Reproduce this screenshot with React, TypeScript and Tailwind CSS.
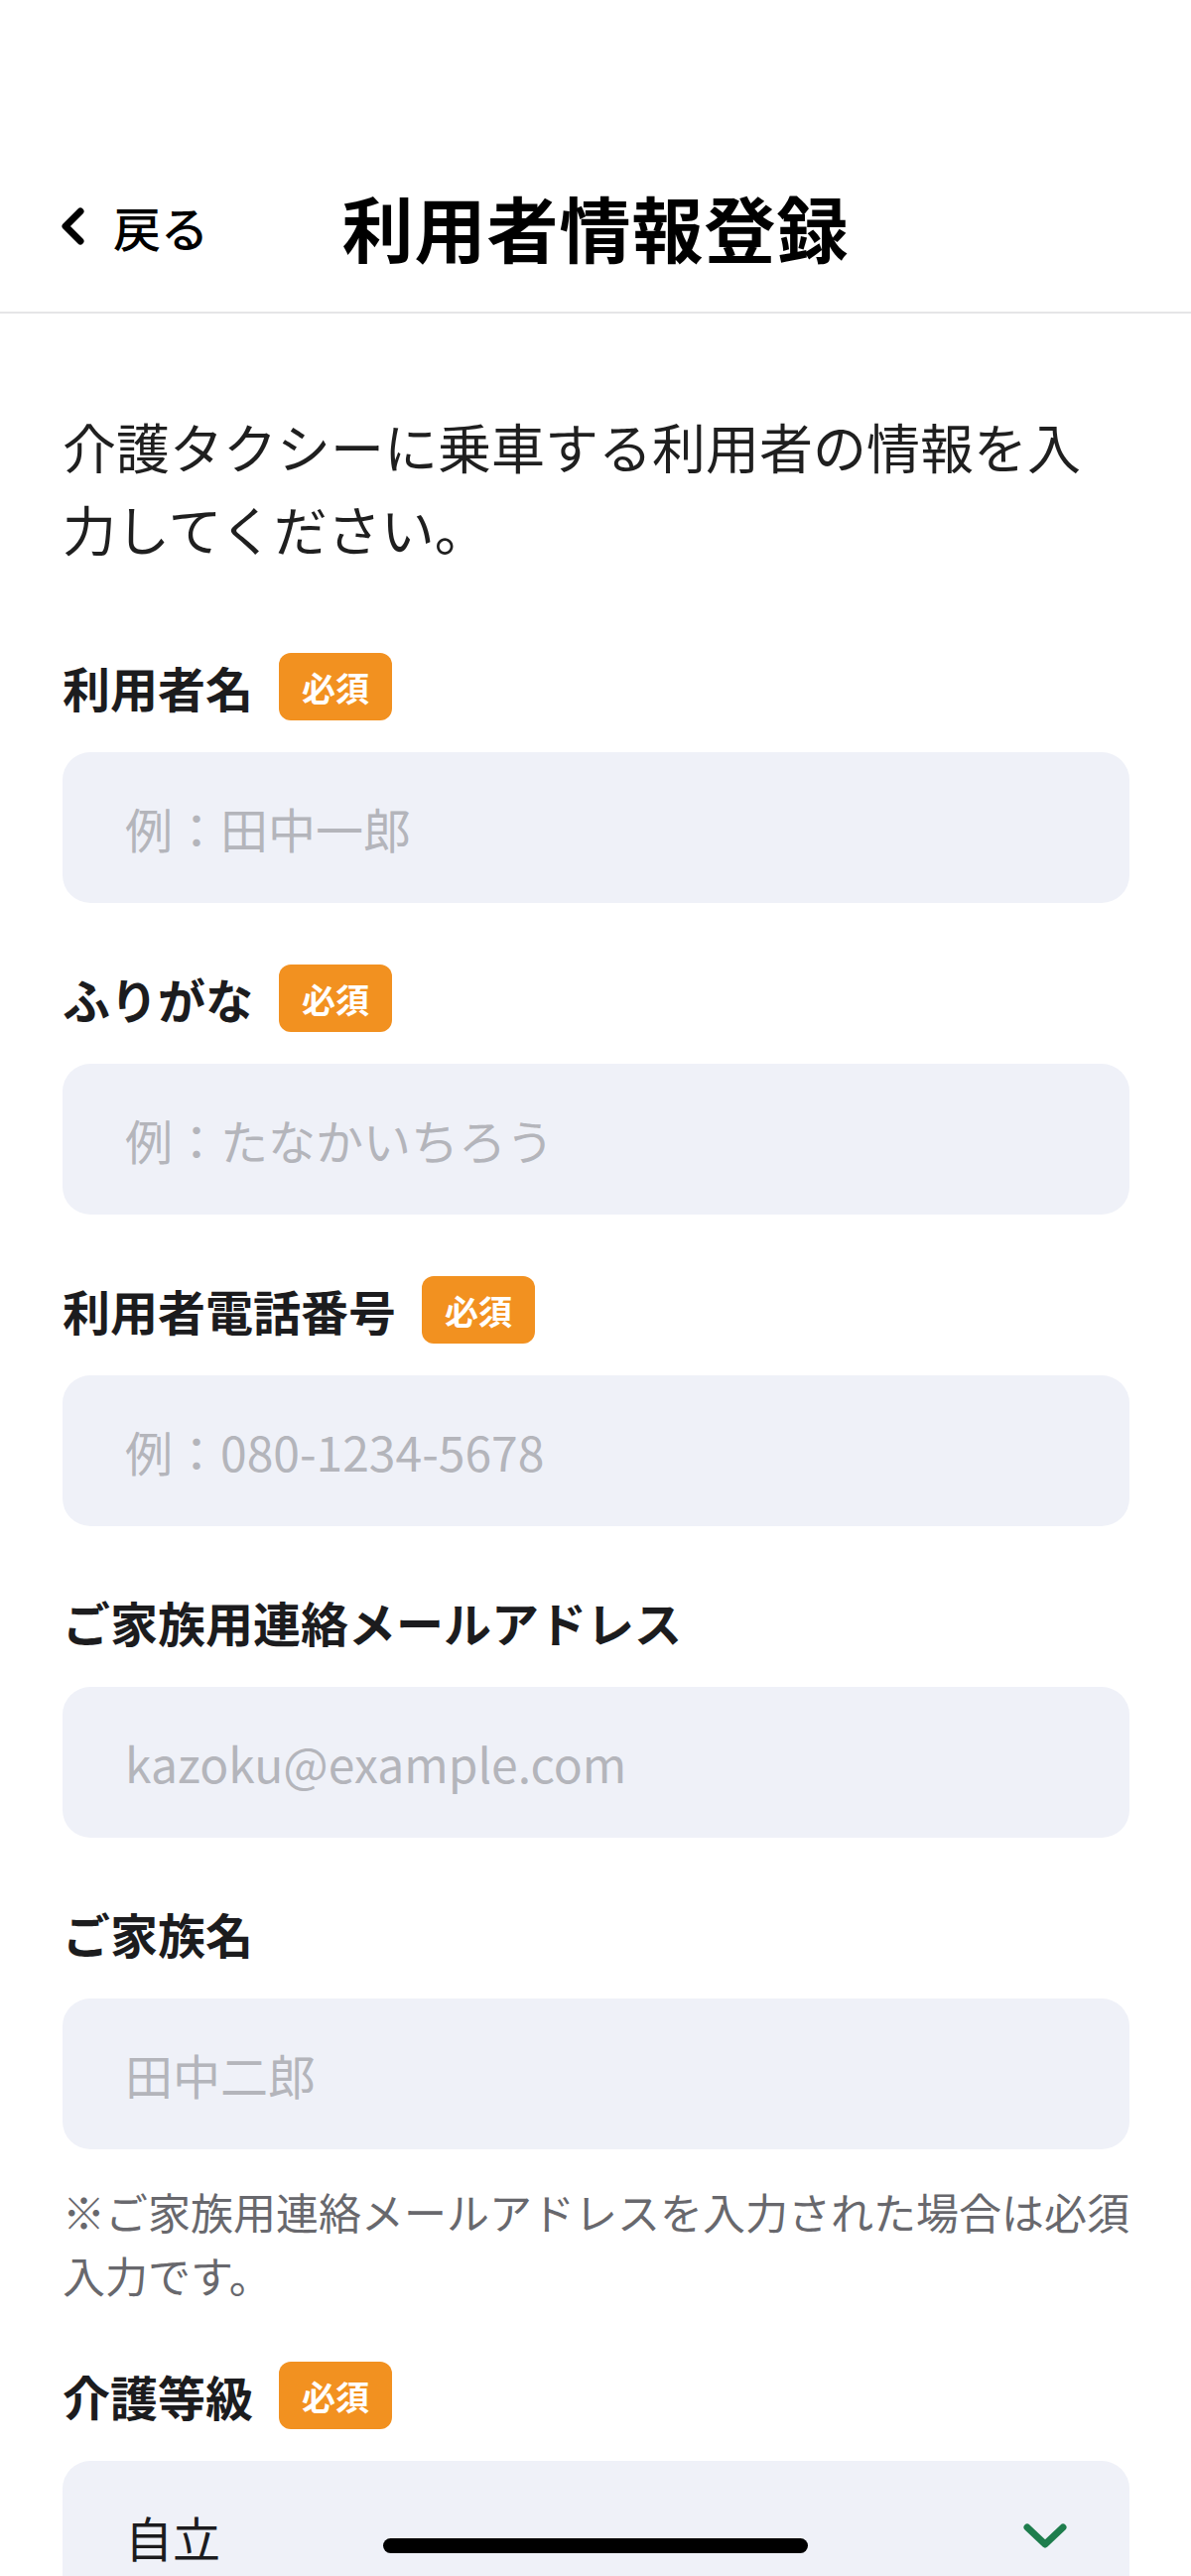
import React from "react";

function Badge() {
  return (
    <span className="ml-[26px] inline-flex h-[68px] w-[114px] items-center justify-center rounded-[12px] bg-[#f29120] text-[34px] font-semibold text-white">
      必須
    </span>
  );
}

function Label({ text, required }: { text: string; required?: boolean }) {
  return (
    <div className="flex h-[68px] items-center">
      <span className="text-[48px] font-bold leading-none text-[#1c1c1e]">{text}</span>
      {required && <Badge />}
    </div>
  );
}

function Field({ label, placeholder, required, first }: { label: string; placeholder: string; required?: boolean; first?: boolean }) {
  return (
    <div className={first ? "mt-[84px]" : "mt-[62px]"}>
      <Label text={label} required={required} />
      <input
        className="mt-[32px] block h-[152px] w-full rounded-[28px] bg-[#eff1f8] pl-[63px] text-[48px] text-[#1c1c1e] outline-none placeholder:text-[#b4b5bb]"
        placeholder={placeholder}
        readOnly
      />
    </div>
  );
}

export default function App() {
  return (
    <div className="relative h-[2596px] w-[1200px] overflow-hidden bg-white font-['Noto_Sans_CJK_JP',sans-serif]">
      <div className="h-[150px]" />
      <header className="grid h-[166px] grid-cols-[1fr_auto_1fr] items-center border-b-[2px] border-[#e5e5e7] pb-[8px]">
        <div className="flex items-center pl-[60px]">
          <svg width="26" height="38" viewBox="0 0 26 38" fill="none">
            <path d="M21 4 L6 19 L21 34" stroke="#000" strokeWidth="7" strokeLinecap="round" strokeLinejoin="round" />
          </svg>
          <span className="ml-[28px] text-[48px] font-medium leading-none text-black">戻る</span>
        </div>
        <h1 className="text-[72px] font-bold leading-none tracking-[1px] text-black">利用者情報登録</h1>
        <div />
      </header>
      <main className="px-[63px] pr-[62px]">
        <p className="mt-[92px] text-[54px] leading-[83px] text-[#1f1f1f]">
          介護タクシーに乗車する利用者の情報を入力してください。
        </p>
        <Field first label="利用者名" placeholder="例：田中一郎" required />
        <Field label="ふりがな" placeholder="例：たなかいちろう" required />
        <Field label="利用者電話番号" placeholder="例：080-1234-5678" required />
        <Field label="ご家族用連絡メールアドレス" placeholder="kazoku@example.com" />
        <Field label="ご家族名" placeholder="田中二郎" />
        <p className="mt-[30px] text-[43px] leading-[64px] text-[#68686d]">
          ※ご家族用連絡メールアドレスを入力された場合は必須入力です。
        </p>
        <div className="mt-[56px]">
          <Label text="介護等級" required />
          <div className="mt-[32px] flex h-[152px] w-full items-center justify-between rounded-[28px] bg-[#eff1f8] pl-[63px] pr-[62px]">
            <span className="text-[48px] text-[#1c1c1e]">自立</span>
            <svg width="46" height="28" viewBox="0 0 46 28" fill="none">
              <path d="M5 5 L23 22 L41 5" stroke="#1e7d4d" strokeWidth="7" strokeLinecap="round" strokeLinejoin="round" />
            </svg>
          </div>
        </div>
      </main>
      <div className="absolute bottom-[23px] left-1/2 h-[15px] w-[428px] -translate-x-1/2 rounded-full bg-black" />
    </div>
  );
}
